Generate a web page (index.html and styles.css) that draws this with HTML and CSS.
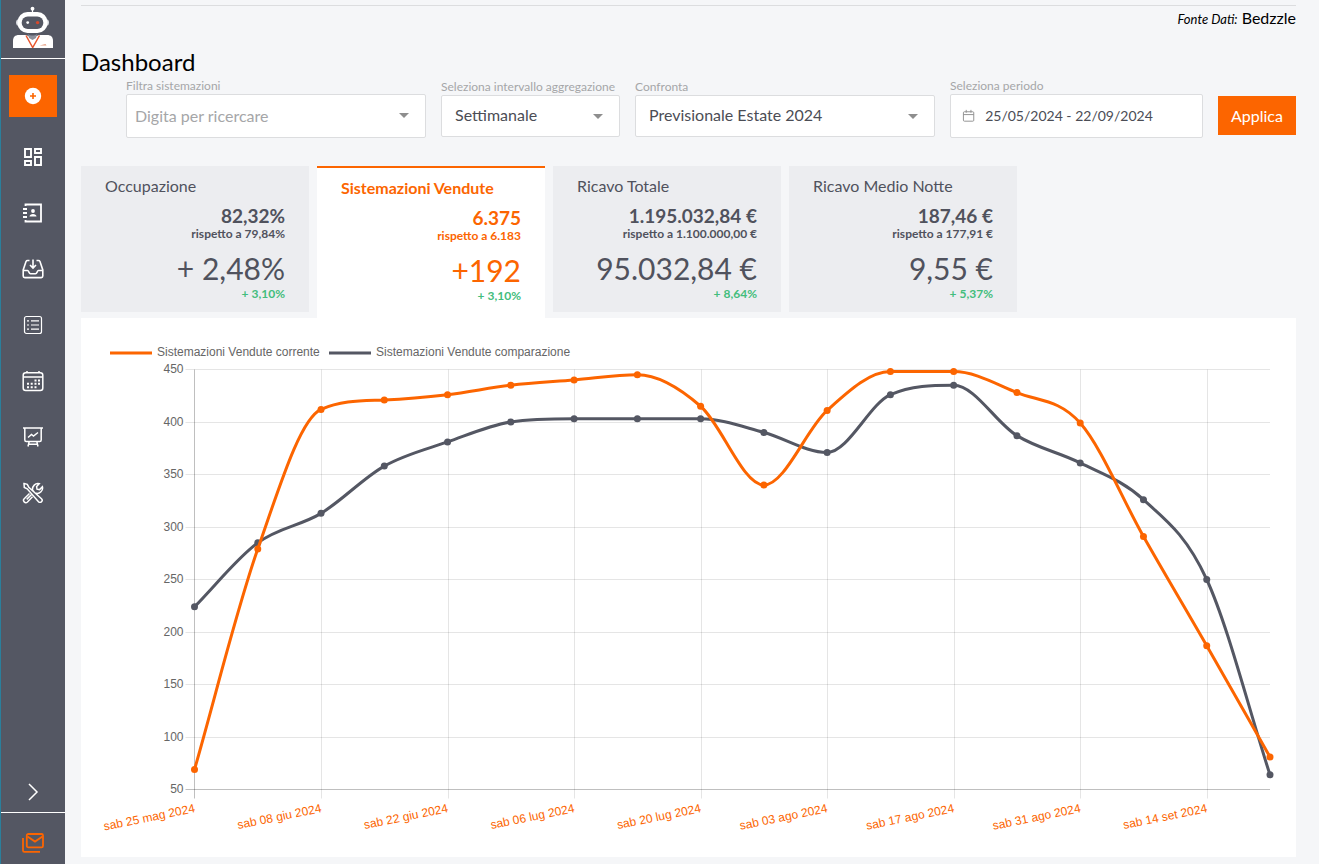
FILE: index.html
```html
<!DOCTYPE html>
<html lang="it">
<head>
<meta charset="utf-8">
<meta name="viewport" content="width=device-width, initial-scale=1">
<title>Dashboard</title>
<link rel="stylesheet" href="styles.css">
</head>
<body>
<div class="app">
  <nav class="sidebar" aria-label="Menu principale">
    <a class="brand" href="#" aria-label="Home">
      <svg width="42" height="42" viewBox="0 0 42 42">
        <path d="M20.5 3v5" stroke="#fff" stroke-width="1.2"/>
        <circle cx="20.5" cy="2.7" r="1.9" fill="#fff"/>
        <rect x="4" y="13" width="33" height="7" rx="3.5" fill="#d9dbe0"/>
        <rect x="5.5" y="6" width="30" height="21" rx="10" fill="#fff"/>
        <rect x="9.7" y="10.5" width="21.6" height="12.6" rx="6" fill="#545763"/>
        <circle cx="15.7" cy="16.6" r="1.4" fill="#fff"/>
        <circle cx="25.6" cy="16.6" r="1.7" fill="#d9482b"/>
        <path d="M1 42v-7c0-4 2-6 6-6h7l6.5 3 6.5-3h8c4 0 6 2 6 6v7z" fill="#fff"/>
        <path d="M16 28c2 2 7 2 9 0l-1 4-3.500 2-3.500-2z" fill="#8d909b"/>
        <path d="M14 29.500l6.700 12 6.800-12" fill="none" stroke="#e8562d" stroke-width="1.5"/>
        <path d="M27.500 39.500l6-1.500 1 1.500z" fill="#e39a7d"/>
      </svg>
    </a>
    <button class="add" aria-label="Aggiungi">
      <svg width="18" height="18" viewBox="0 0 18 18"><circle cx="9" cy="9" r="8.2" fill="#fff"/><path d="M9 6v6M6 9h6" stroke="#fc6500" stroke-width="1.6"/></svg>
    </button>
    <ul class="menu">
      <li><a href="#" aria-label="Dashboard"><svg viewBox="0 0 22 22" stroke-width="1.9"><path d="M3 3h6v8H3zM13 3h6v4h-6zM13 11h6v8h-6zM3 15h6v4H3z"/></svg></a></li>
      <li><a href="#" aria-label="Rubrica"><svg viewBox="0 0 22 22" stroke-width="1.8"><path d="M3.500 4V2.500h15.500v17H3.500V18M1 7h4M1 11h4M1 15h4"/><circle cx="11" cy="9" r="1.900" fill="currentColor" stroke="none"/><path d="M7.500 14.500c0-3.500 7-3.500 7 0z" fill="currentColor" stroke="none"/></svg></a></li>
      <li><a href="#" aria-label="Arrivi"><svg viewBox="0 0 22 22" stroke-width="1.6"><path d="M7.500 2.500H5.500c-.8 0-1.200.4-1.500 1L1.200 12v6c0 1 .6 1.600 1.600 1.600h16.400c1 0 1.600-.6 1.600-1.600v-6L18 3.500c-.3-.6-.7-1-1.500-1h-2M1.200 12.500h4.500c1 0 1.200 3.200 2.800 3.200h5c1.600 0 1.800-3.200 2.800-3.200h4.500M11 1.500v8M8 7l3 3 3-3"/></svg></a></li>
      <li><a href="#" aria-label="Elenco"><svg viewBox="0 0 22 22" stroke-width="1.2"><rect x="2.5" y="2.5" width="17" height="17" rx="2"/><path d="M5 6.800h2M9 6.800h8M5 11h2M9 11h8M5 15.200h2M9 15.200h8"/></svg></a></li>
      <li><a href="#" aria-label="Calendario"><svg viewBox="0 0 22 22" stroke-width="1.5"><rect x="1.2" y="2.8" width="19.6" height="17.6" rx="2.5"/><path d="M1.200 7h19.600M5 1v2M17 1v2"/><path d="M12.500 10.500h2M16 10.500h2M5 13.800h2M8.700 13.800h2M12.500 13.800h2M16 13.800h2M5 17.200h2M8.700 17.200h2M12.500 17.200h2" stroke-width="1.9"/></svg></a></li>
      <li><a href="#" aria-label="Statistiche"><svg viewBox="0 0 22 22" stroke-width="1.5"><path d="M1 2h20M2.800 2v12c0 1 .5 1.500 1.500 1.500h13.400c1 0 1.500-.5 1.500-1.500V2M7.200 15.500L6 20.500M14.800 15.500l1.200 5M6.500 18.200h9M6 11.500l3.500-3 2 1.500L16 6.500"/></svg></a></li>
      <li><a href="#" aria-label="Strumenti"><svg viewBox="0 0 22 22" stroke-width="1.5"><path d="M2 1.600l3.300.7 1.500 2.900 12.700 11.500c2 2-1 5-3 3L5.200 6.800 2.300 5.400zM12 9.800L10.600 8.400C9.800 4.500 13.500.5 17.300 1.700L14.600 4.500l.4 2.700 2.600.4 2.800-2.800c1 3.800-2.700 7.400-6.500 6.500M9.300 12.800l-4.600 4.600M10.500 14.800l-5 5.200c-2.400 2-5.300-1.200-3.300-3.300L7.500 11.500"/></svg></a></li>
    </ul>
    <button class="expand" aria-label="Espandi menu"><svg width="12" height="18" viewBox="0 0 12 18"><path d="M2 1l8 8-8 8" fill="none" stroke="#fff" stroke-width="1.5"/></svg></button>
    <a class="mail" href="#" aria-label="Messaggi"><svg width="22" height="20" viewBox="0 0 22 20" fill="none" stroke="#fc6500" stroke-width="1.8"><rect x="4.8" y="1" width="16.2" height="13.4" rx="1.5"/><path d="M5.500 3.500L13 8.600l7.500-5.100M1 5v12.500c0 .8.500 1.300 1.300 1.300H18"/></svg></a>
  </nav>

  <main class="content">
    <p class="source"><em>Fonte Dati:</em> Bedzzle</p>
    <h1 class="title">Dashboard</h1>

    <form class="filters">
      <div class="field search">
        <label for="rooms">Filtra sistemazioni</label>
        <div class="box tall arrow"><input id="rooms" type="text" placeholder="Digita per ricercare"></div>
      </div>
      <div class="field interval">
        <label for="interval">Seleziona intervallo aggregazione</label>
        <div class="box arrow"><select id="interval"><option>Settimanale</option></select></div>
      </div>
      <div class="field compare">
        <label for="compare">Confronta</label>
        <div class="box arrow"><select id="compare"><option>Previsionale Estate 2024</option></select></div>
      </div>
      <div class="field period">
        <label for="period">Seleziona periodo</label>
        <div class="box tall dates">
          <svg width="14" height="14" viewBox="0 0 14 14" fill="none" stroke="#8e8e8e"><rect x="1.5" y="2.5" width="11" height="10" rx="1"/><path d="M1.500 5.500h11M4.500 .5v3M9.500 .5v3"/></svg>
          <input id="period" type="text" value="25/05/2024 - 22/09/2024">
        </div>
      </div>
      <button class="apply" type="button">Applica</button>
    </form>

    <div class="tabs" role="tablist">
      <button class="tab" role="tab" aria-selected="false">
        <span class="name">Occupazione</span><span class="value">82,32%</span><span class="versus">rispetto a 79,84%</span><span class="delta">+ 2,48%</span><span class="percent">+ 3,10%</span>
      </button>
      <button class="tab active" role="tab" aria-selected="true">
        <span class="name">Sistemazioni Vendute</span><span class="value">6.375</span><span class="versus">rispetto a 6.183</span><span class="delta">+192</span><span class="percent">+ 3,10%</span>
      </button>
      <button class="tab" role="tab" aria-selected="false">
        <span class="name">Ricavo Totale</span><span class="value">1.195.032,84 €</span><span class="versus">rispetto a 1.100.000,00 €</span><span class="delta">95.032,84 €</span><span class="percent">+ 8,64%</span>
      </button>
      <button class="tab" role="tab" aria-selected="false">
        <span class="name">Ricavo Medio Notte</span><span class="value">187,46 €</span><span class="versus">rispetto a 177,91 €</span><span class="delta">9,55 €</span><span class="percent">+ 5,37%</span>
      </button>
    </div>

    <section class="panel" role="tabpanel" aria-label="Sistemazioni Vendute">
      <svg class="chart" id="chart" viewBox="0 0 1215 539">
        <path class="line current" d="M29 35H71"/>
        <text class="legend" x="76" y="38">Sistemazioni Vendute corrente</text>
        <path class="line previous" d="M248 35H290"/>
        <text class="legend" x="295" y="38">Sistemazioni Vendute comparazione</text>
      </svg>
    </section>
  </main>
</div>
<script src="chart.js"></script>
</body>
</html>
```
FILE: styles.css
```css
* { box-sizing: border-box; }

body {
  margin: 0;
  background: #f5f6f8;
  color: #000;
  font-family: Lato, sans-serif;
  font-size: 16px;
}

button, input, select { font: inherit; color: inherit; }
button { border: 0; cursor: pointer; }

.app { display: flex; min-height: 100vh; }

.sidebar {
  flex: none;
  display: flex;
  flex-direction: column;
  align-items: center;
  width: 65px;
  border-left: 1px solid #2a7f9b;
  background: #545763;
  color: #fff;
}

.brand {
  display: flex;
  justify-content: center;
  align-self: stretch;
  padding: 6px 0 10px;
  border-bottom: 1px solid #fff;
}

.add {
  display: grid;
  place-items: center;
  width: 48px;
  height: 42px;
  margin-top: 16px;
  padding: 0;
  background: #fc6500;
}

.menu {
  display: flex;
  flex-direction: column;
  gap: 34px;
  margin: 29px 0 0;
  padding: 0;
  list-style: none;
}

.menu a { display: block; color: #fff; }

.menu svg {
  display: block;
  width: 22px;
  height: 22px;
  fill: none;
  stroke: currentColor;
}

.expand {
  display: grid;
  place-items: center;
  align-self: stretch;
  height: 40px;
  margin-top: auto;
  padding: 0;
  background: none;
}

.mail {
  display: grid;
  place-items: center;
  align-self: stretch;
  height: 52px;
  padding-top: 9px;
  border-top: 1px solid #fff;
}

.content { flex: 1; min-width: 0; padding: 5px 23px 7px 16px; }

.source {
  margin: 0;
  padding-top: 2px;
  border-top: 1px solid #dcdddf;
  line-height: 20px;
  text-align: right;
}

.source em { font-size: 13px; }

.title {
  margin: 18px 0 3px;
  font-size: 24px;
  font-weight: 400;
  line-height: 30px;
}

.filters { display: flex; align-items: center; gap: 15px; padding-left: 45px; }
.field { min-width: 0; }
.search, .compare { flex: 300 1 0; }
.interval { flex: 179 1 0; }
.period { flex: 253 1 0; }

.field label {
  display: block;
  padding-bottom: 2px;
  color: #a5a6a8;
  font-size: 12px;
  line-height: 12px;
  white-space: nowrap;
}

.box {
  position: relative;
  display: flex;
  height: 42px;
  border: 1px solid #dcdddf;
  border-radius: 2px;
  background: #fff;
  color: #4b4d55;
}

.box.tall { height: 44px; }

.box input, .box select {
  width: 100%;
  min-width: 0;
  padding: 0 8px 2px;
  border: 0;
  outline: 0;
  background: none;
  appearance: none;
}

.box select { padding: 0 13px 4px; }
.box input::placeholder { color: #a5a6a8; opacity: 1; }

.arrow::after {
  content: "";
  position: absolute;
  top: 18px;
  right: 16px;
  border: 5px solid transparent;
  border-top-color: #8e8e8e;
  border-bottom: 0;
  pointer-events: none;
}

.dates { align-items: center; padding-left: 11px; }
.dates input { padding-left: 10px; font-size: 14px; }

.apply {
  flex: 78 1 0;
  height: 39px;
  margin-top: 13px;
  padding: 0;
  background: #fc6500;
  color: #fff;
}

.tabs { display: flex; align-items: flex-start; gap: 8px; height: 152px; margin-top: 28px; }

.tab {
  display: flex;
  flex-direction: column;
  width: 228px;
  padding: 8px 24px 12px;
  background: #ecedf0;
  color: #50525d;
  text-align: right;
}

.tab.active {
  padding-bottom: 16px;
  border-top: 2px solid #fc6500;
  background: #fff;
  color: #fc6500;
}

.name { margin-bottom: 6px; line-height: 24px; text-align: left; }
.active .name { font-weight: 700; }
.value { font-size: 19px; font-weight: 700; line-height: 24px; }
.versus { font-size: 12px; font-weight: 700; line-height: 12px; }
.delta { margin-top: 8px; font-size: 30px; line-height: 40px; }
.percent { color: #43bd7c; font-size: 12px; font-weight: 700; line-height: 12px; }

.panel { background: #fff; }

.chart {
  display: block;
  width: 100%;
  height: auto;
  font-family: "Liberation Sans", Arial, sans-serif;
  font-size: 12px;
}

.legend, .tick { fill: #666; }
.tick { text-anchor: end; }
.date { fill: #fc6500; text-anchor: end; }
.grid { stroke: #000; stroke-opacity: .1; }
.axis { stroke: #000; stroke-opacity: .25; }
.line { fill: none; stroke-width: 3; }
.line.current { stroke: #fc6500; }
.line.previous { stroke: #545763; }
.dot.current { fill: #fc6500; }
.dot.previous { fill: #545763; }
```
FILE: chart.js
```js
const current = [69, 279, 412, 421, 426, 435, 440, 445, 415, 340, 411, 448, 448, 428, 399, 291, 187, 81];
const previous = [224, 285, 313, 358, 381, 400, 403, 403, 403, 390, 371, 426, 435, 387, 361, 326, 250, 64];
const dates = ["25 mag", "08 giu", "22 giu", "06 lug", "20 lug", "03 ago", "17 ago", "31 ago", "14 set"];

const area = { left: 113.5, right: 1189, top: 51.5, bottom: 471.5 };
const chart = document.getElementById("chart");

function add(name, attributes, text) {
  const node = document.createElementNS("http://www.w3.org/2000/svg", name);
  for (const key in attributes) node.setAttribute(key, attributes[key]);
  if (text) node.textContent = text;
  chart.appendChild(node);
}

const xAt = i => area.left + i * (area.right - area.left) / (current.length - 1);
const yAt = v => area.bottom - (v - 50) * (area.bottom - area.top) / 400;

// Monotone cubic tangents: the curve never overshoots its points.
function tangents(points) {
  const last = points.length - 1;
  const slopes = [];
  for (let i = 0; i < last; i++) {
    slopes.push((points[i + 1][1] - points[i][1]) / (points[i + 1][0] - points[i][0]));
  }
  const m = points.map((p, i) => {
    if (i === 0) return slopes[0];
    if (i === last) return slopes[last - 1];
    return slopes[i - 1] * slopes[i] <= 0 ? 0 : (slopes[i - 1] + slopes[i]) / 2;
  });
  for (let i = 0; i < last; i++) {
    if (slopes[i] === 0) {
      m[i] = m[i + 1] = 0;
      continue;
    }
    const a = m[i] / slopes[i];
    const b = m[i + 1] / slopes[i];
    const length = a * a + b * b;
    if (length > 9) {
      const t = 3 / Math.sqrt(length);
      m[i] = a * t * slopes[i];
      m[i + 1] = b * t * slopes[i];
    }
  }
  return m;
}

function drawSeries(values, kind) {
  const points = values.map((v, i) => [xAt(i), yAt(v)]);
  const m = tangents(points);
  let d = "M" + points[0];
  for (let i = 1; i < points.length; i++) {
    const [x0, y0] = points[i - 1];
    const [x1, y1] = points[i];
    const step = (x1 - x0) / 3;
    d += `C${x0 + step} ${y0 + m[i - 1] * step} ${x1 - step} ${y1 - m[i] * step} ${x1} ${y1}`;
  }
  add("path", { class: "line " + kind, d });
  points.forEach(p => add("circle", { class: "dot " + kind, cx: p[0], cy: p[1], r: 3.5 }));
}

for (let v = 450; v >= 50; v -= 50) {
  const y = Math.floor(yAt(v)) + 0.5;
  add("path", { class: v === 50 ? "axis" : "grid", d: `M${area.left - 9} ${y}H${area.right}` });
  add("text", { class: "tick", x: area.left - 11, y: y + 3 }, String(v));
}

dates.forEach((date, i) => {
  const x = Math.round(xAt(i * 2)) + (i ? 0.5 : -0.5);
  add("path", { class: i ? "grid" : "axis", d: `M${x} ${area.top}V${area.bottom + 9}` });
  add("text", { class: "date", transform: `translate(${xAt(i * 2) + 1} 494) rotate(-11.5)` }, `sab ${date} 2024`);
});

drawSeries(previous, "previous");
drawSeries(current, "current");
```
